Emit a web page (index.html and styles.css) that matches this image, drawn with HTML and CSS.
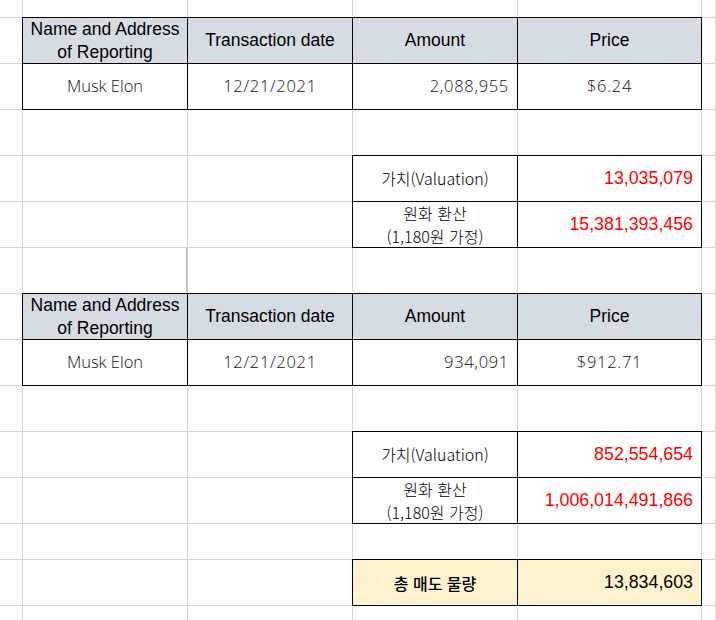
FILE: index.html
```html
<!DOCTYPE html>
<html lang="ko">
<head>
<meta charset="utf-8">
<title>Sheet</title>
<link rel="stylesheet" href="styles.css">
</head>
<body>
<div class="sheet">
  <!-- R0 -->
  <div class="c"></div><div class="c"></div><div class="c"></div><div class="c"></div><div class="c"></div><div class="c"></div>
  <!-- R1 header -->
  <div class="c"></div>
  <div class="c b hd">Name and Address<br>of Reporting</div>
  <div class="c b hd">Transaction date</div>
  <div class="c b hd">Amount</div>
  <div class="c b hd">Price</div>
  <div class="c"></div>
  <!-- R2 data -->
  <div class="c"></div>
  <div class="c b lt mid">Musk Elon</div>
  <div class="c b lt dg mid">12/21/2021</div>
  <div class="c b lt dg rt">2,088,955</div>
  <div class="c b lt dg mid">$6.24</div>
  <div class="c"></div>
  <!-- R3 -->
  <div class="c"></div><div class="c"></div><div class="c"></div><div class="c"></div><div class="c"></div><div class="c"></div>
  <!-- R4 -->
  <div class="c"></div><div class="c"></div><div class="c"></div>
  <div class="c b kr mid">가치(Valuation)</div>
  <div class="c b red rt">13,035,079</div>
  <div class="c"></div>
  <!-- R5 -->
  <div class="c"></div><div class="c"></div><div class="c"></div>
  <div class="c b kr mid two">원화 환산<br>(1,180원 가정)</div>
  <div class="c b red rt">15,381,393,456</div>
  <div class="c"></div>
  <!-- R6 -->
  <div class="c"></div><div class="c resize"></div><div class="c"></div><div class="c"></div><div class="c"></div><div class="c"></div>
  <!-- R7 header -->
  <div class="c"></div>
  <div class="c b hd">Name and Address<br>of Reporting</div>
  <div class="c b hd">Transaction date</div>
  <div class="c b hd">Amount</div>
  <div class="c b hd">Price</div>
  <div class="c"></div>
  <!-- R8 data -->
  <div class="c"></div>
  <div class="c b lt mid">Musk Elon</div>
  <div class="c b lt dg mid">12/21/2021</div>
  <div class="c b lt dg rt">934,091</div>
  <div class="c b lt dg mid">$912.71</div>
  <div class="c"></div>
  <!-- R9 -->
  <div class="c"></div><div class="c"></div><div class="c"></div><div class="c"></div><div class="c"></div><div class="c"></div>
  <!-- R10 -->
  <div class="c"></div><div class="c"></div><div class="c"></div>
  <div class="c b kr mid">가치(Valuation)</div>
  <div class="c b red rt">852,554,654</div>
  <div class="c"></div>
  <!-- R11 -->
  <div class="c"></div><div class="c"></div><div class="c"></div>
  <div class="c b kr mid two">원화 환산<br>(1,180원 가정)</div>
  <div class="c b red rt">1,006,014,491,866</div>
  <div class="c"></div>
  <!-- R12 -->
  <div class="c"></div><div class="c"></div><div class="c"></div><div class="c"></div><div class="c"></div><div class="c"></div>
  <!-- R13 -->
  <div class="c"></div><div class="c"></div><div class="c"></div>
  <div class="c b yl total mid">총 매도 물량</div>
  <div class="c b yl num rt">13,834,603</div>
  <div class="c"></div>
  <!-- R14 -->
  <div class="c"></div><div class="c"></div><div class="c"></div><div class="c"></div><div class="c"></div><div class="c"></div>
</div>
</body>
</html>
```
FILE: styles.css
```css
html, body {
  margin: 0;
  padding: 0;
  background: #ffffff;
}

.sheet {
  display: grid;
  grid-template-columns: 23px 165px 165px 165px 184px 1fr;
  grid-template-rows: 18px repeat(11, 46px) 36px 46px 46px;
  width: 716px;
  height: 620px;
  overflow: hidden;
  font-family: "Liberation Sans", "Noto Sans CJK KR", sans-serif;
  color: #000;
}

.c {
  box-sizing: border-box;
  border-right: 1px solid #d4d4d4;
  border-bottom: 1px solid #d4d4d4;
  display: flex;
  flex-direction: column;
  justify-content: center;
  white-space: nowrap;
}

.b {
  border: 1px solid #000;
  margin: -1px 0 0 -1px;
}

.hd {
  background: #d6dce4;
  align-items: center;
  text-align: center;
  font-size: 17.5px;
  line-height: 23px;
}

.lt {
  font-family: "Open Sans", "Noto Sans CJK KR", sans-serif;
  font-weight: 300;
  font-size: 16.5px;
  line-height: 22px;
  padding-bottom: 2px;
  color: #111;
}

.dg {
  letter-spacing: 0.7px;
}

.kr {
  font-family: "Noto Sans CJK KR", sans-serif;
  font-weight: 300;
  font-size: 16px;
  line-height: 23px;
}

.mid {
  align-items: center;
  text-align: center;
}

.rt {
  align-items: flex-end;
  text-align: right;
  padding-right: 8px;
}

.lt.rt {
  padding-right: 8px;
}

.red {
  color: #ff0000;
  font-size: 17.8px;
}

.num {
  font-size: 17.8px;
}

.yl {
  background: #fff2cc;
}

.total {
  font-family: "Noto Sans CJK KR", sans-serif;
  font-size: 16px;
  font-weight: 500;
}

.resize {
  border-right: 2px solid #c6c6c6;
}
```
